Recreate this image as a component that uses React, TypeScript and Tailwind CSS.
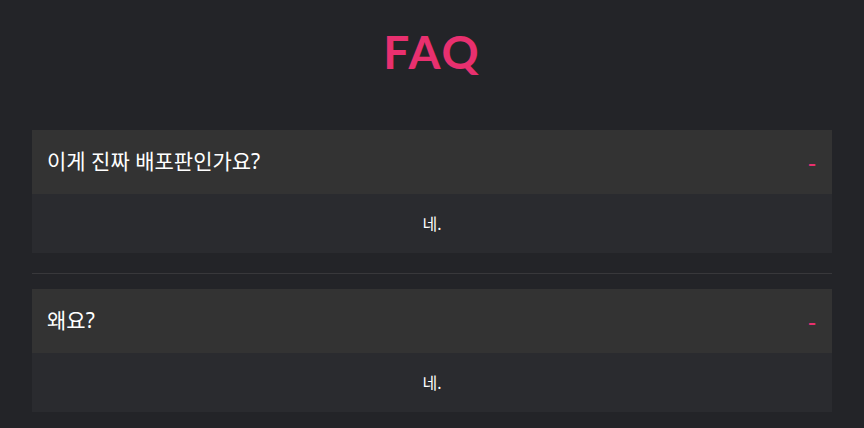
import { useState } from 'react';

const faqs = [
  { q: '이게 진짜 배포판인가요?', a: '네.' },
  { q: '왜요?', a: '네.' },
];

const App = () => {
  const [open, setOpen] = useState<boolean[]>([true, true]);

  const toggle = (idx: number) => {
    setOpen(prev => prev.map((v, i) => (i === idx ? !v : v)));
  };

  return (
    <div
      className="min-h-screen bg-[#232428] px-8 pb-8"
      style={{ fontFamily: '"Noto Sans", "Noto Sans CJK KR", sans-serif' }}
    >
      <h1
        className="text-center text-[#e8306f] text-[46px] font-bold tracking-[2px] pt-[22px] pb-[48px] leading-[60px]"
        style={{ fontFamily: 'Lato, "Noto Sans", sans-serif' }}
      >
        FAQ
      </h1>

      {faqs.map((item, idx) => (
        <div key={idx}>
          {idx > 0 && <hr className="border-0 border-t border-[#38383b] mt-5 mb-[15px]" />}
          <div>
            <button
              onClick={() => toggle(idx)}
              className="w-full h-16 bg-[#333333] flex items-center justify-between pl-[15px] pr-4 text-left"
            >
              <span className="text-white text-[21px]">{item.q}</span>
              <span className="text-[#e8306f] text-[25px] leading-none">{open[idx] ? '-' : '+'}</span>
            </button>
            {open[idx] && (
              <div className="bg-[#2a2b2f] h-[59px] flex items-center justify-center text-white text-[16px]">
                {item.a}
              </div>
            )}
          </div>
        </div>
      ))}
    </div>
  );
};

export default App;
